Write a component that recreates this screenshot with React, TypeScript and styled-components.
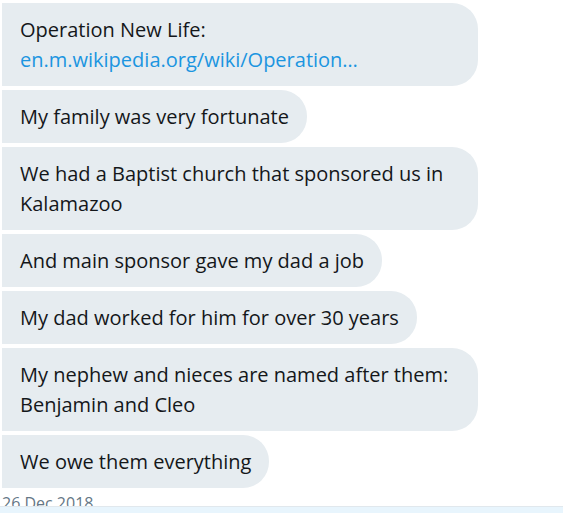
import React from "react";
import styled, { createGlobalStyle } from "styled-components";

const GlobalStyle = createGlobalStyle`
  html, body {
    margin: 0;
    padding: 0;
    background: #ffffff;
    overflow: hidden;
  }
  body {
    font-family: "Open Sans", "Noto Sans", sans-serif;
  }
`;

const Page = styled.div`
  width: 563px;
  height: 513px;
  display: flex;
  flex-direction: column;
  overflow: hidden;
`;

const Thread = styled.div`
  display: flex;
  flex-direction: column;
  align-items: flex-start;
  gap: 4px;
  padding: 3px 0 0 2px;
`;

const Bubble = styled.div<{ $wide?: boolean }>`
  box-sizing: border-box;
  width: ${(p) => (p.$wide ? "476px" : "auto")};
  max-width: 476px;
  padding: 11.5px 18px;
  background: #e6ecf0;
  color: #14171a;
  font-size: 20px;
  line-height: 30px;
  border-radius: 0 26px 26px 0;
`;

const Link = styled.a`
  color: #1b95e0;
  text-decoration: none;
  display: block;
`;

const Stamp = styled.div`
  height: 18px;
  overflow: hidden;
  padding-left: 2px;
  color: #657786;
  font-size: 16px;
  line-height: 30px;
`;

const Composer = styled.div`
  flex: 1;
  background: #e8f5fd;
  border-top: 1px solid #e1e8ed;
`;

const messages = [
  "My family was very fortunate",
  "We had a Baptist church that sponsored us in Kalamazoo",
  "And main sponsor gave my dad a job",
  "My dad worked for him for over 30 years",
  "My nephew and nieces are named after them: Benjamin and Cleo",
  "We owe them everything",
];

export default function App() {
  return (
    <Page>
      <GlobalStyle />
      <Thread>
        <Bubble $wide>
          Operation New Life:
          <Link href="#">en.m.wikipedia.org/wiki/Operation…</Link>
        </Bubble>
        {messages.map((m) => (
          <Bubble key={m}>{m}</Bubble>
        ))}
      </Thread>
      <Stamp>26 Dec 2018</Stamp>
      <Composer />
    </Page>
  );
}
